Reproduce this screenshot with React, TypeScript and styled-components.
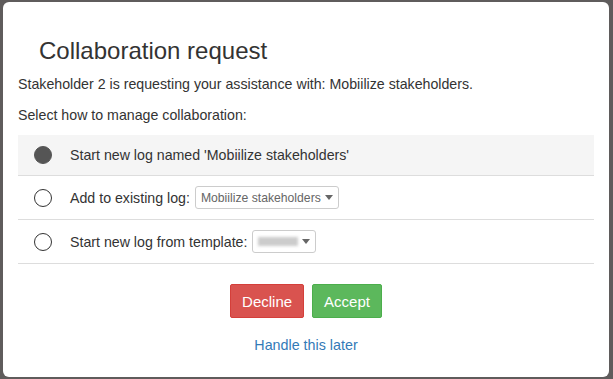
import styled, { createGlobalStyle } from "styled-components";

const GlobalStyle = createGlobalStyle`
  html, body {
    margin: 0;
    padding: 0;
    background: #5f5c5c;
    font-family: "Liberation Sans", Arial, sans-serif;
    color: #333;
  }
`;

const Backdrop = styled.div`
  width: 613px;
  height: 379px;
  overflow: hidden;
  padding: 2px 4px 2px 3px;
  box-sizing: border-box;
`;

const Modal = styled.div`
  background: #fff;
  border-radius: 6px;
  height: 375px;
  box-sizing: border-box;
  padding: 0 15px;
  display: flex;
  flex-direction: column;
`;

const Title = styled.h2`
  font-size: 24px;
  font-weight: 400;
  margin: 35px 0 0 21px;
  line-height: 28px;
  color: #333;
`;

const Para = styled.p<{ top: number }>`
  font-size: 14.2px;
  line-height: 20px;
  margin: ${(p) => p.top}px 0 0 0;
`;

const OptionList = styled.div`
  margin-top: 10px;
  display: flex;
  flex-direction: column;
`;

const Option = styled.div<{ active?: boolean }>`
  display: flex;
  align-items: center;
  height: ${(p) => (p.active ? 40 : 43)}px;
  padding-left: 16px;
  background: ${(p) => (p.active ? "#f5f5f5" : "#fff")};
  border-bottom: 1px solid #ddd;
  font-size: 14.2px;
`;

const Radio = styled.span<{ checked?: boolean }>`
  width: 18px;
  height: 18px;
  border-radius: 50%;
  box-sizing: border-box;
  border: 1.6px solid ${(p) => (p.checked ? "#555" : "#333")};
  background: ${(p) => (p.checked ? "#555" : "#fff")};
  margin-right: 18px;
  flex: none;
`;

const Select = styled.span`
  display: inline-flex;
  align-items: center;
  height: 23px;
  box-sizing: border-box;
  border: 1px solid #ccc;
  border-radius: 3px;
  padding: 0 5px;
  margin-left: 5px;
  font-size: 12.2px;
  color: #666;
  gap: 4px;
`;

const Caret = styled.span`
  width: 0;
  height: 0;
  border-left: 4px solid transparent;
  border-right: 4px solid transparent;
  border-top: 5px solid #666;
`;

const Blurred = styled.span`
  display: inline-block;
  width: 40px;
  height: 9px;
  background: #ccc;
  filter: blur(1.5px);
`;

const Actions = styled.div`
  display: flex;
  justify-content: center;
  gap: 8px;
  margin-top: 20px;
`;

const Button = styled.button<{ tone: "danger" | "success" }>`
  font-family: inherit;
  font-size: 15px;
  color: #fff;
  height: 34px;
  padding: 0 11px;
  border-radius: 2px;
  border: 1px solid ${(p) => (p.tone === "danger" ? "#d43f3a" : "#4cae4c")};
  background: ${(p) => (p.tone === "danger" ? "#d9534f" : "#5cb85c")};
`;

const LaterLink = styled.a`
  align-self: center;
  margin-top: 19px;
  font-size: 14.3px;
  color: #337ab7;
  text-decoration: none;
`;

export default function App() {
  return (
    <Backdrop>
      <GlobalStyle />
      <Modal>
        <Title>Collaboration request</Title>
        <Para top={9}>
          Stakeholder 2 is requesting your assistance with: Mobiilize
          stakeholders.
        </Para>
        <Para top={11}>Select how to manage collaboration:</Para>
        <OptionList>
          <Option active>
            <Radio checked />
            Start new log named 'Mobiilize stakeholders'
          </Option>
          <Option>
            <Radio />
            Add to existing log:
            <Select>
              Mobiilize stakeholders <Caret />
            </Select>
          </Option>
          <Option>
            <Radio />
            Start new log from template:
            <Select>
              <Blurred /> <Caret />
            </Select>
          </Option>
        </OptionList>
        <Actions>
          <Button tone="danger">Decline</Button>
          <Button tone="success">Accept</Button>
        </Actions>
        <LaterLink href="#">Handle this later</LaterLink>
      </Modal>
    </Backdrop>
  );
}
